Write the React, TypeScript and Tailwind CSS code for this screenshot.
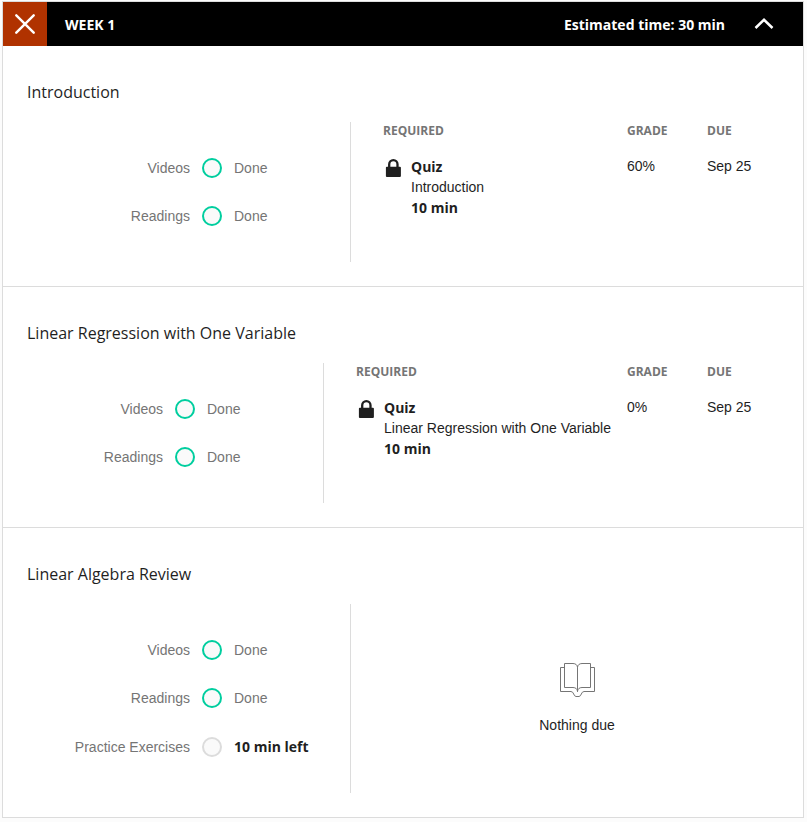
type Item = { label: string; left?: string };
type Quiz = { name: string; grade: string; due: string };

const sans = "font-['Liberation_Sans',Arial,sans-serif]";
const open = "font-['Open_Sans',sans-serif]";

function Lock() {
  return (
    <svg width="16" height="18" viewBox="0 0 16 18" className="mt-1 ml-0.5 shrink-0" fill="none">
      <path d="M4.200 9V5.300a4.150 4.150 0 0 1 8.300 0V9" stroke="#1f1f1f" strokeWidth="2.300" />
      <rect x="0.900" y="7.700" width="15" height="10.200" rx="1" fill="#1f1f1f" />
    </svg>
  );
}

function Book() {
  return (
    <svg className="ml-px" width="35" height="36" viewBox="0 0 35 36" fill="none" stroke="#757575" strokeWidth="1">
      <path d="M4.500 1.500H13c2.500 0 4.500 1.500 4.500 4v24c0-2.500-2-4-4.500-4H4.500z" />
      <path d="M30.500 1.500H22c-2.500 0-4.500 1.500-4.500 4v24c0-2.500 2-4 4.500-4h8.500z" />
      <path d="M4.500 5.500h-4v24H11c3 0 2.500 5 5 5h3c2.500 0 2-5 5-5h10.500v-24h-4" />
    </svg>
  );
}

function Progress({ items }: { items: Item[] }) {
  return (
    <div className="flex w-[324px] min-w-0 shrink flex-col border-r border-[#dcdcdc] pt-6">
      {items.map((it) => (
        <div
          key={it.label}
          className={"flex items-center text-[#757575] " + (it.left ? "h-[49px] pt-px" : "h-12") + " -mt-0.5 mb-0.5"}
        >
          <span className="flex-1 whitespace-nowrap text-right">{it.label}</span>
          <span
            className={
              "mx-3 size-5 shrink-0 rounded-full border-2 bg-[#fafafa] " +
              (it.left ? "border-[#dcdcdc]" : "border-[#00ce9f]")
            }
          />
          {it.left ? (
            <span className={open + " w-[116px] shrink-0 pb-0.5 font-bold text-[#1f1f1f]"}>{it.left}</span>
          ) : (
            <span className="w-[116px] shrink-0">Done</span>
          )}
        </div>
      ))}
    </div>
  );
}

function Required({ quiz }: { quiz: Quiz }) {
  const head = open + " text-[12px] leading-[18px] font-bold text-[#757575]";
  return (
    <div className="flex flex-1 pl-8">
      <div className="flex-1">
        <div className={head}>REQUIRED</div>
        <div className="mt-[15px] flex">
          <Lock />
          <div className="ml-2.5 whitespace-nowrap leading-5">
            <div className={open + " h-[21px] pt-0.5 font-bold"}>Quiz</div>
            <div className="h-5 pt-px">{quiz.name}</div>
            <div className={open + " pt-0.5 font-bold"}>10 min</div>
          </div>
        </div>
      </div>
      <div className="w-20 shrink-0">
        <div className={head}>GRADE</div>
        <div className="mt-4 leading-5">{quiz.grade}</div>
      </div>
      <div className="w-[72px] shrink-0">
        <div className={head}>DUE</div>
        <div className="mt-4 leading-5">{quiz.due}</div>
      </div>
    </div>
  );
}

function Section({ title, items, quiz, narrow, last }: { title: string; items: Item[]; quiz?: Quiz; narrow?: boolean; last?: boolean }) {
  return (
    <section className={"p-6 " + (last ? "" : "border-b border-[#dcdcdc]")}>
      <h2 className={open + " h-[52px] pt-2.5 text-base leading-6"}>{title}</h2>
      <div className={"flex " + (last ? "h-[189px]" : "h-[140px]")}>
        <div className={"flex shrink-0 " + (narrow ? "w-[297px]" : "w-[324px]")}>
          <Progress items={items} />
        </div>
        {quiz ? (
          <Required quiz={quiz} />
        ) : (
          <div className="flex flex-1 flex-col items-center pt-[58px] pl-6">
            <Book />
            <div className="mt-[17px] leading-5">Nothing due</div>
          </div>
        )}
      </div>
    </section>
  );
}

export default function App() {
  const done: Item[] = [{ label: "Videos" }, { label: "Readings" }];
  return (
    <div className="min-h-[822px] bg-[#fcfcfc] pt-px pl-0.5">
      <div className={sans + " h-[817px] w-[802px] border border-[#dcdcdc] bg-white text-[14px] text-[#1f1f1f]"}>
        <header className={open + " flex h-11 items-center bg-black text-[14px] font-bold text-white"}>
          <div className="flex size-11 items-center justify-center bg-[#b03200]">
            <svg width="20" height="20" viewBox="0 0 20 20" stroke="#fff" strokeWidth="2.400" strokeLinecap="round">
              <path d="M1.300 1.300l17.400 17.400M18.700 1.300L1.300 18.700" />
            </svg>
          </div>
          <span className="ml-[18px] flex-1">WEEK 1</span>
          <span>Estimated time: 30 min</span>
          <svg className="mr-[29px] ml-[29px]" width="20" height="12" viewBox="0 0 20 12" fill="none" stroke="#fff" strokeWidth="2.500">
            <path d="M1.500 10L10 1.800L18.500 10" />
          </svg>
        </header>
        <Section title="Introduction" items={done} quiz={{ name: "Introduction", grade: "60%", due: "Sep 25" }} />
        <Section
          title="Linear Regression with One Variable"
          items={done}
          quiz={{ name: "Linear Regression with One Variable", grade: "0%", due: "Sep 25" }}
          narrow
        />
        <Section title="Linear Algebra Review" items={[...done, { label: "Practice Exercises", left: "10 min left" }]} last />
      </div>
    </div>
  );
}
